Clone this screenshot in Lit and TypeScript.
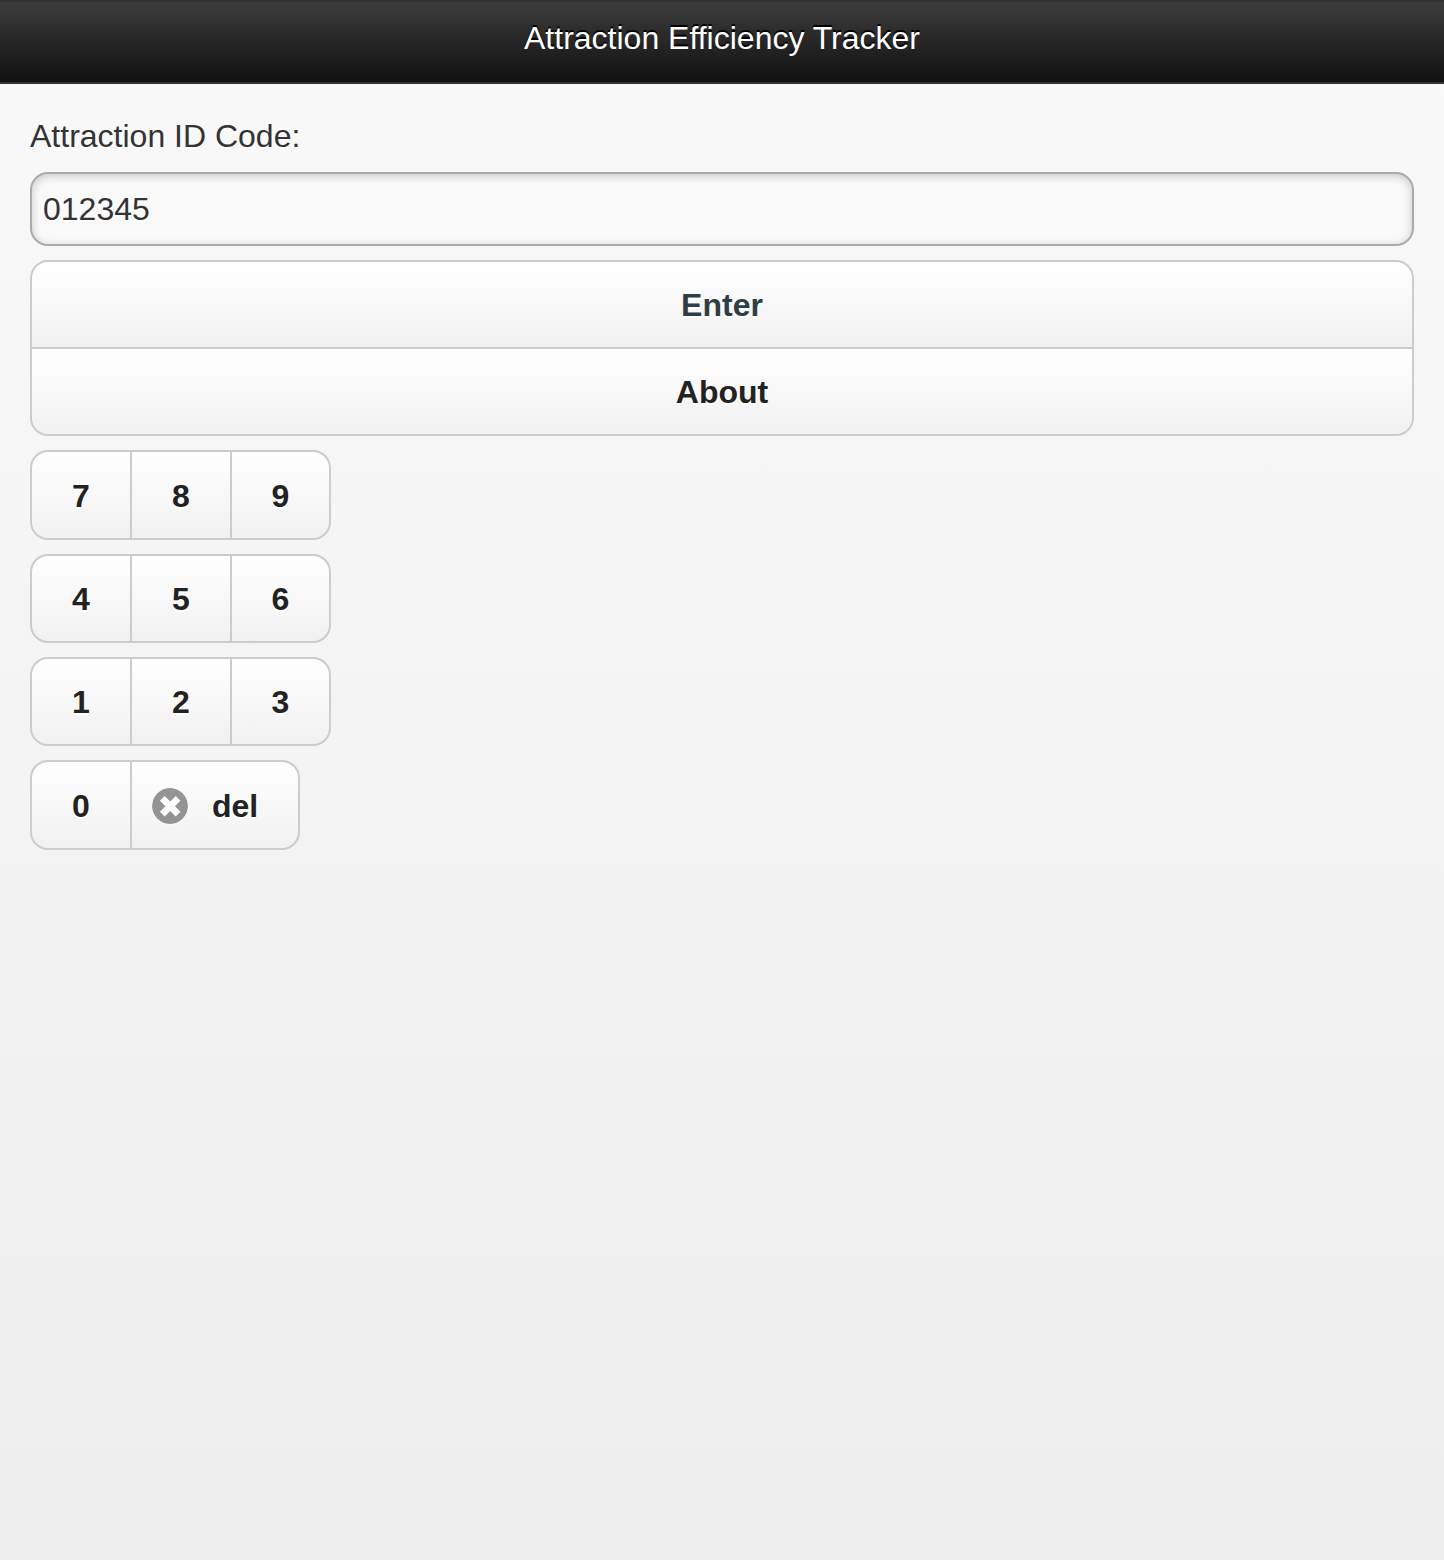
import { LitElement, html, css, svg } from "lit";
import { customElement, state } from "lit/decorators.js";

const ROWS = [
  { cls: "tall", keys: ["7", "8", "9"] },
  { cls: "", keys: ["4", "5", "6"] },
  { cls: "", keys: ["1", "2", "3"] },
  { cls: "tall", keys: ["0", "del"] },
];

@customElement("app-root")
export class AppRoot extends LitElement {
  static styles = css`
    :host {
      display: block;
      min-height: 1560px;
      background: linear-gradient(#f9f9f9, #eee);
      color: #333;
      font-family: "Liberation Sans", Arial, sans-serif;
      font-size: 32px;
      line-height: 40px;
      text-shadow: 0 2px 0 #fff;
    }
    * {
      box-sizing: border-box;
    }
    .header {
      height: 84px;
      padding-top: 16px;
      border-top: 2px solid #333;
      border-bottom: 2px solid #333;
      background: linear-gradient(#3c3c3c, #111);
      color: #fff;
      text-align: center;
      text-shadow: 0 -2px 0 #000;
    }
    .title {
      margin: 0;
      font-size: 32px;
      font-weight: 400;
    }
    .content {
      display: flex;
      flex-direction: column;
      align-items: flex-start;
      gap: 14px;
      padding: 32px 30px 0;
    }
    .field {
      display: flex;
      flex-direction: column;
      gap: 16px;
      width: 100%;
    }
    .code {
      width: 100%;
      height: 74px;
      margin: 0;
      padding: 0 11px;
      border: 2px solid #aaa;
      border-radius: 18px;
      outline: none;
      background: #f9f9f9;
      box-shadow: inset 0 2px 8px rgba(0, 0, 0, 0.2);
      color: #333;
      font: inherit;
      text-shadow: inherit;
    }
    .group {
      display: flex;
      border: 2px solid #ccc;
      border-radius: 18px;
      overflow: hidden;
      background: #ccc;
      gap: 2px;
    }
    .actions {
      flex-direction: column;
      width: 100%;
      height: 176px;
    }
    .row {
      height: 89px;
    }
    .row.tall {
      height: 90px;
    }
    .btn {
      display: flex;
      align-items: center;
      justify-content: center;
      margin: 0;
      padding: 0;
      border: 0;
      background: linear-gradient(#fff, #f1f1f1);
      color: #222;
      font: bold 32px/40px "Liberation Sans", Arial, sans-serif;
      text-shadow: 0 2px 0 #fff;
    }
    .actions .btn {
      flex: 1;
    }
    .enter {
      color: #2f3e46;
    }
    .key {
      width: 98px;
    }
    .tall .key {
      padding-top: 2px;
    }
    .key:last-child {
      width: 97px;
    }
    .key.del {
      justify-content: flex-start;
      width: 166px;
      padding-left: 20px;
      gap: 24px;
    }
    .icon {
      width: 36px;
      height: 36px;
      border-radius: 50%;
      flex: none;
      box-shadow: 0 2px 0 rgba(255, 255, 255, 0.4);
    }
  `;

  @state() private code = "012345";

  private press(key: string) {
    this.code = key === "del" ? this.code.slice(0, -1) : this.code + key;
  }

  private icon() {
    return html`<svg class="icon" viewBox="0 0 36 36" aria-hidden="true">
      ${svg`<circle cx="18" cy="18" r="18" fill="#949494"></circle>
      <path d="M10.3 10.3L26.1 26.1M26.1 10.3L10.3 26.1" stroke="#fff" stroke-width="6.6"></path>`}
    </svg>`;
  }

  private key(k: string) {
    return html`<button class="btn key ${k === "del" ? "del" : ""}" @click=${() => this.press(k)}>
      ${k === "del" ? this.icon() : ""}<span>${k}</span>
    </button>`;
  }

  render() {
    return html`
      <header class="header"><h1 class="title">Attraction Efficiency Tracker</h1></header>
      <main class="content">
        <div class="field">
          <label for="code">Attraction ID Code:</label>
          <input id="code" class="code" type="text" .value=${this.code} />
        </div>
        <div class="group actions">
          <button class="btn enter">Enter</button>
          <button class="btn">About</button>
        </div>
        ${ROWS.map((r) => html`<div class="group row ${r.cls}">${r.keys.map((k) => this.key(k))}</div>`)}
      </main>
    `;
  }
}
